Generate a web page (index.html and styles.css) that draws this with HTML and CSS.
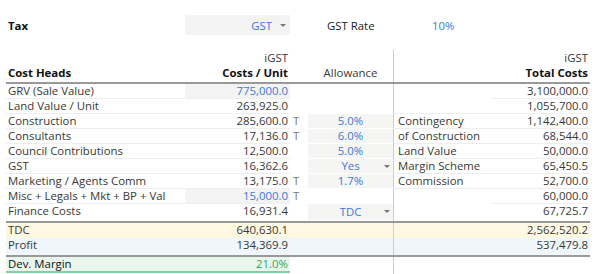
FILE: index.html
```html
<!DOCTYPE html>
<html lang="en">
<head>
    <meta charset="UTF-8">
    <title>Feasibility</title>
    <link rel="stylesheet" href="styles.css">
</head>
<body>
    <div class="sheet">
        <div class="top">
            <div class="c-a bold">Tax</div>
            <div class="c-b input select"><span class="blue">GST</span><span class="arrow"></span></div>
            <div class="rate-label">GST Rate</div>
            <div class="rate blue">10%</div>
        </div>

        <div class="row head">
            <div></div>
            <div class="num">iGST</div>
            <div></div>
            <div></div>
            <div class="split"></div>
            <div class="num">iGST</div>
        </div>
        <div class="row head thick">
            <div class="bold">Cost Heads</div>
            <div class="num bold">Costs / Unit</div>
            <div></div>
            <div class="center">Allowance</div>
            <div class="split"></div>
            <div class="num bold">Total Costs</div>
        </div>

        <div class="row">
            <div class="line">GRV (Sale Value)</div>
            <div class="num input blue line">775,000.0</div>
            <div></div>
            <div></div>
            <div class="split"></div>
            <div class="num line">3,100,000.0</div>
        </div>
        <div class="row">
            <div class="line">Land Value / Unit</div>
            <div class="num line">263,925.0</div>
            <div></div>
            <div></div>
            <div class="split line"></div>
            <div class="num line">1,055,700.0</div>
        </div>
        <div class="row">
            <div class="line">Construction</div>
            <div class="num line">285,600.0</div>
            <div class="flag">T</div>
            <div class="allow blue center">5.0%</div>
            <div class="split line">Contingency</div>
            <div class="num line">1,142,400.0</div>
        </div>
        <div class="row">
            <div class="line">Consultants</div>
            <div class="num line">17,136.0</div>
            <div class="flag">T</div>
            <div class="allow blue center">6.0%</div>
            <div class="split line">of Construction</div>
            <div class="num line">68,544.0</div>
        </div>
        <div class="row">
            <div class="line">Council Contributions</div>
            <div class="num line">12,500.0</div>
            <div></div>
            <div class="allow blue center">5.0%</div>
            <div class="split line">Land Value</div>
            <div class="num line">50,000.0</div>
        </div>
        <div class="row">
            <div class="line">GST</div>
            <div class="num line">16,362.6</div>
            <div></div>
            <div class="allow select center"><span class="blue">Yes</span><span class="arrow"></span></div>
            <div class="split line">Margin Scheme</div>
            <div class="num line">65,450.5</div>
        </div>
        <div class="row">
            <div class="line">Marketing / Agents Comm</div>
            <div class="num line">13,175.0</div>
            <div class="flag">T</div>
            <div class="allow blue center">1.7%</div>
            <div class="split line">Commission</div>
            <div class="num line">52,700.0</div>
        </div>
        <div class="row">
            <div class="line">Misc + Legals + Mkt + BP + Val</div>
            <div class="num input blue line">15,000.0</div>
            <div class="flag">T</div>
            <div></div>
            <div class="split"></div>
            <div class="num line">60,000.0</div>
        </div>
        <div class="row thick">
            <div>Finance Costs</div>
            <div class="num">16,931.4</div>
            <div></div>
            <div class="allow select center"><span class="blue">TDC</span><span class="arrow"></span></div>
            <div class="split"></div>
            <div class="num">67,725.7</div>
        </div>
        <div class="row total tdc">
            <div>TDC</div>
            <div class="num">640,630.1</div>
            <div></div>
            <div></div>
            <div class="split"></div>
            <div class="num">2,562,520.2</div>
        </div>
        <div class="row total profit thick">
            <div>Profit</div>
            <div class="num">134,369.9</div>
            <div></div>
            <div></div>
            <div class="split"></div>
            <div class="num">537,479.8</div>
        </div>
        <div class="row margin">
            <div class="margin-cell dark">Dev. Margin</div>
            <div class="margin-cell num green">21.0%</div>
            <div></div>
            <div></div>
            <div class="split"></div>
            <div></div>
        </div>
        <div class="row filler">
            <div></div><div></div><div></div><div></div>
            <div class="split"></div>
            <div></div>
        </div>
    </div>
</body>
</html>
```

FILE: styles.css
```css
body {
    margin: 0;
    font-family: "Open Sans", Arial, sans-serif;
    font-size: 11.4px;
    color: #383838;
    background: #fff;
    overflow: hidden;
}
.sheet {
    padding: 15px 0 0 6px;
    width: 584px;
    height: 259px;
}
.top {
    display: flex;
    align-items: center;
    height: 20px;
    margin-bottom: 15px;
}
.top .c-a {
    width: 177px;
    padding-left: 2px;
}
.top .c-b {
    width: 105px;
    height: 20px;
    box-sizing: border-box;
}
.rate-label {
    margin-left: 37px;
    width: 105px;
    color: #222;
}
.bold {
    font-weight: bold;
    color: #111;
}
.blue {
    color: #3c78d8;
}
.green {
    color: #2eaa55;
}
.dark {
    color: #111;
}
.row {
    display: grid;
    grid-template-columns: 179px 105px 18px 85px 98px 99px;
    height: 15px;
    line-height: 14px;
}
.row > div {
    box-sizing: border-box;
    padding: 0 2px;
    white-space: nowrap;
}
.row.head > div {
    line-height: 15px;
}
.row.thick {
    border-bottom: 2px solid #999;
    height: 17px;
}
.line {
    border-bottom: 1px solid #eeeeee;
}
.num {
    text-align: right;
}
.center {
    text-align: center;
}
.input {
    background: #f3f3f3;
}
.allow {
    background: #f5f5f3;
    margin-bottom: 1px;
}
.flag {
    color: #777;
    padding-left: 3px !important;
}
.select {
    display: flex;
    align-items: center;
    justify-content: flex-end;
}
.allow.select {
    justify-content: center;
    position: relative;
}
.top .select {
    padding-right: 4px;
}
.top .select .blue {
    margin-right: 8px;
}
.arrow {
    display: inline-block;
    width: 0;
    height: 0;
    border-left: 3px solid transparent;
    border-right: 3px solid transparent;
    border-top: 3px solid #777;
}
.allow.select .arrow {
    position: absolute;
    right: 3px;
    top: 6px;
}
.row .split {
    border-left: 1px solid #cccccc;
    padding-left: 4px;
}
.tdc {
    background: #fff9e3;
}
.profit {
    background: #eff6fc;
}
.margin .margin-cell {
    background: #eaf5ee;
    border-bottom: 2px solid #7fd1a0;
}
.margin {
    height: 16px;
}
.filler {
    height: 12px;
}
```
